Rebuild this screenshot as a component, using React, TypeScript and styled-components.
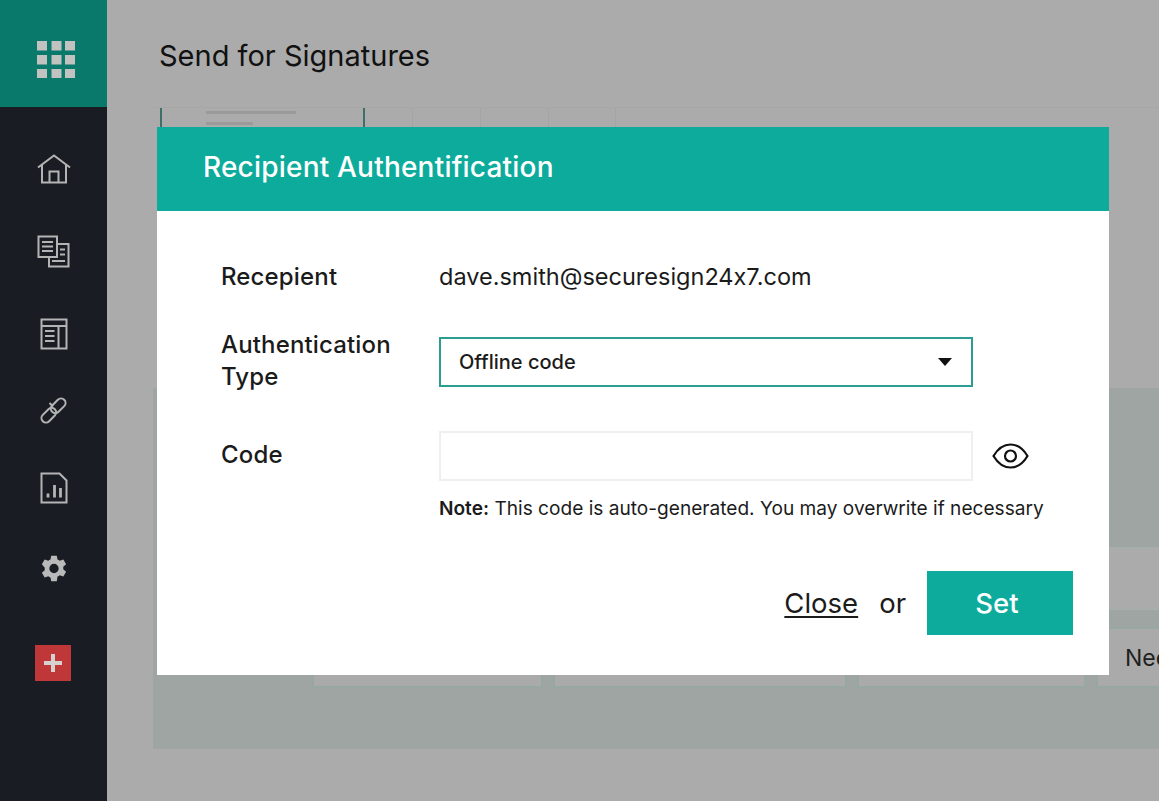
import React from "react";
import styled, { createGlobalStyle } from "styled-components";

const GlobalStyle = createGlobalStyle`
  * {
    box-sizing: border-box;
  }

  html,
  body {
    margin: 0;
    background: #fff;
    font-family: Inter, "Noto Sans", sans-serif;
    font-feature-settings: "calt" 0;
    overflow: hidden;
  }
`;

const GridIcon = () => (
  <svg width="38" height="37" viewBox="0 0 38 37" fill="#c2c2c0">
    {[0, 14.5, 28].map((x) =>
      [0, 14, 28].map((y) => <rect key={`${x}-${y}`} x={x} y={y} width="10" height="9.5" />)
    )}
  </svg>
);

const HomeIcon = () => (
  <svg width="34" height="30" viewBox="0 0 34 30" fill="none" stroke="#b4b4b4" strokeWidth="2">
    <path d="M1 13.5 17 1.500l16 12" />
    <path d="M5 11v17.500h24V11" />
    <path d="M12.500 28.500V17.500h9v11" />
  </svg>
);

const DocsIcon = () => (
  <svg width="33" height="33" viewBox="0 0 33 33" fill="none" stroke="#b4b4b4" strokeWidth="2">
    <path d="M20 22H1.500V1.500H20V22Z" />
    <path d="M5 7h11M5 11.500h11M5 16h11" />
    <path d="M20 9h11.500v22.500H12V22" />
    <path d="M23 14.500h5M23 19.500h5M15 26h13" />
  </svg>
);

const TemplateIcon = () => (
  <svg width="28" height="32" viewBox="0 0 28 32" fill="none" stroke="#b4b4b4" strokeWidth="2">
    <path d="M1.500 1.500h25v29h-25z" />
    <path d="M1.500 8h25M18.500 8v22.500" />
    <path d="M5 13h9.500M5 18h9.500M5 23h9.500" />
  </svg>
);

const LinkIcon = () => (
  <svg width="27" height="27" viewBox="0 0 27 27" fill="none" stroke="#b4b4b4" strokeWidth="2">
    <path d="M13 9.500 9.500 6a4.500 4.500 0 0 0 0 0" />
    <rect x="-8.500" y="-4.500" width="17" height="9" rx="4.500" transform="translate(8.800 18.200) rotate(-45)" />
    <rect x="-8.500" y="-4.500" width="17" height="9" rx="4.500" transform="translate(18.200 8.800) rotate(-45)" />
  </svg>
);

const ReportIcon = () => (
  <svg width="28" height="32" viewBox="0 0 28 32" fill="none" stroke="#b4b4b4" strokeWidth="2">
    <path d="M1.500 1.500h18l7 7v22h-25z" />
    <path d="M8 25.500v-4M14.500 25.500V13M20.500 25.500V16" strokeWidth="2.800" />
  </svg>
);

const GearIcon = () => (
  <svg width="28" height="29" viewBox="0 0 24 24" fill="#b9b9b9">
    <path
      fillRule="evenodd"
      d="M9.600 1h4.800l.6 3.200c.7.3 1.300.6 1.900 1.100l3.100-1.100 2.400 4.200-2.500 2.100c.1.700.1 1.400 0 2.100l2.500 2.100-2.400 4.200-3.100-1.100c-.6.500-1.200.8-1.900 1.100L14.400 23H9.600L9 19.800c-.7-.3-1.300-.6-1.900-1.100L4 19.800l-2.400-4.200 2.500-2.100a7 7 0 0 1 0-2.100L1.600 8.400 4 4.200l3.100 1.100C7.700 4.800 8.300 4.500 9 4.200L9.600 1ZM12 8a4 4 0 1 0 0 8 4 4 0 0 0 0-8Z"
    />
  </svg>
);

const EyeIcon = () => (
  <svg width="37" height="28" viewBox="0 0 37 28" fill="none" stroke="#111" strokeWidth="2.200">
    <path d="M1.500 14C6 6.500 12 2.500 18.500 2.500S31 6.500 35.500 14C31 21.500 25 25.500 18.500 25.500S6 21.500 1.500 14Z" />
    <circle cx="18.500" cy="14" r="5.500" />
  </svg>
);

const navItems = [
  { icon: <HomeIcon />, top: 47 },
  { icon: <DocsIcon />, top: 51 },
  { icon: <TemplateIcon />, top: 50 },
  { icon: <LinkIcon />, top: 47 },
  { icon: <ReportIcon />, top: 48 },
  { icon: <GearIcon />, top: 50 },
];

const cards = [
  { width: 231 },
  { width: 294 },
  { width: 229 },
  { width: 100, label: "Need" },
];

const App = () => {
  return (
    <>
      <GlobalStyle />
      <Page>
        <Sidebar>
          <AppTile>
            <GridIcon />
          </AppTile>
          {navItems.map((item, i) => (
            <NavItem key={i} $top={item.top}>
              {item.icon}
            </NavItem>
          ))}
          <AddButton>
            <PlusH />
            <PlusV />
          </AddButton>
        </Sidebar>

        <Main>
          <TopBar>Send for Signatures</TopBar>

          <Tabs>
            <Tab $width={203} $accent>
              <TabLine $width={90} />
              <TabLine $width={47} />
            </Tab>
            <Tab $width={49} $accent />
            <Tab $width={68} />
            <Tab $width={68} />
            <Tab $width={67} />
            <Tab $width={67} />
          </Tabs>

          <Panel>
            <PanelRow />
            <CardRow>
              {cards.map((card, i) => (
                <Card key={i} $width={card.width}>
                  {card.label}
                </Card>
              ))}
            </CardRow>
          </Panel>
        </Main>

        <Modal>
          <ModalHeader>Recipient Authentification</ModalHeader>
          <ModalBody>
            <Form>
              <Label>Recepient</Label>
              <Value>dave.smith@securesign24x7.com</Value>

              <Label>
                Authentication
                <br />
                Type
              </Label>
              <Select>
                Offline code
                <Caret />
              </Select>

              <CodeLabel>Code</CodeLabel>
              <CodeField>
                <CodeInput />
                <EyeIcon />
              </CodeField>
            </Form>

            <Note>
              <b>Note:</b> This code is auto-generated. You may overwrite if necessary
            </Note>

            <Footer>
              <CloseLink>Close</CloseLink>
              <Or>or</Or>
              <SetButton>Set</SetButton>
            </Footer>
          </ModalBody>
        </Modal>
      </Page>
    </>
  );
};

const Page = styled.div`
  position: relative;
  width: 1159px;
  height: 801px;
  display: flex;
  background: #ababab;
  overflow: hidden;
`;

const Sidebar = styled.div`
  width: 107px;
  flex-shrink: 0;
  background: #1a1c23;
  display: flex;
  flex-direction: column;
  align-items: center;
`;

const AppTile = styled.div`
  width: 100%;
  height: 107px;
  padding: 41px 0 0 4px;
  display: flex;
  justify-content: center;
  background: #08796b;
`;

const NavItem = styled.div<{ $top: number }>`
  margin-top: ${(props) => props.$top}px;
  display: flex;
  line-height: 0;
`;

const AddButton = styled.div`
  position: relative;
  width: 36px;
  height: 36px;
  margin: 62px 1px 0 0;
  background: #c0373a;
`;

const PlusH = styled.span`
  position: absolute;
  left: 9px;
  top: 16px;
  width: 18px;
  height: 4px;
  background: #d6d0ce;
`;

const PlusV = styled.span`
  position: absolute;
  left: 16px;
  top: 9px;
  width: 4px;
  height: 18px;
  background: #d6d0ce;
`;

const Main = styled.div`
  flex: 1;
  min-width: 0;
  padding-left: 46px;
`;

const TopBar = styled.div`
  height: 107px;
  padding: 3px 0 0 6px;
  display: flex;
  align-items: center;
  font-size: 29px;
  color: #111;
`;

const Tabs = styled.div`
  height: 281px;
  padding-left: 7px;
  display: flex;
  border-top: 1px solid #a7a7a7;
`;

const Tab = styled.div<{ $width: number; $accent?: boolean }>`
  width: ${(props) => props.$width}px;
  flex-shrink: 0;
  padding: 3px 0 0 44px;
  border-left: ${(props) => (props.$accent ? "2px solid #3f6f68" : "1px solid #a4a4a4")};
`;

const TabLine = styled.div<{ $width: number }>`
  width: ${(props) => props.$width}px;
  height: 3px;
  margin-bottom: 8px;
  background: #9a9a9a;
`;

const Panel = styled.div`
  height: 361px;
  padding: 159px 0 0 159px;
  background: #9fa5a3;
`;

const PanelRow = styled.div`
  height: 63px;
  background: #ababab;
  border-top: 1px solid #a3b1ac;
  border-bottom: 1px solid #a3b1ac;
`;

const CardRow = styled.div`
  margin-top: 17px;
  display: flex;
  gap: 10px;
`;

const Card = styled.div<{ $width: number }>`
  width: ${(props) => props.$width}px;
  height: 61px;
  flex-shrink: 0;
  padding-left: 27px;
  display: flex;
  align-items: center;
  background: #a9aaa9;
  border: 2px solid #97a8a2;
  font-size: 23px;
  color: #1f1f1f;
  white-space: nowrap;
`;

const Modal = styled.div`
  position: absolute;
  left: 157px;
  top: 127px;
  width: 952px;
  height: 548px;
  background: #fff;
  color: #1b1b1b;
`;

const ModalHeader = styled.div`
  height: 84px;
  padding: 0 0 4px 46px;
  display: flex;
  align-items: center;
  background: #0dab9c;
  color: #fff;
  font-size: 28px;
  font-weight: 500;
  letter-spacing: 0.2px;
`;

const ModalBody = styled.div`
  padding: 50px 36px 0 64px;
`;

const Form = styled.div`
  display: grid;
  grid-template-columns: 218px 1fr;
  row-gap: 36px;
  font-size: 24px;
  line-height: 32px;
`;

const Label = styled.div`
  font-weight: 450;
  letter-spacing: 0.15px;
`;

const CodeLabel = styled(Label)`
  margin-top: 10px;
`;

const Value = styled.div`
  font-size: 23.5px;
`;

const Select = styled.div`
  position: relative;
  width: 534px;
  height: 50px;
  margin-top: 8px;
  padding-left: 18px;
  display: flex;
  align-items: center;
  border: 2px solid #2b9d91;
  font-size: 20px;
  font-weight: 450;
`;

const Caret = styled.span`
  position: absolute;
  right: 19px;
  top: 19px;
  border-left: 7px solid transparent;
  border-right: 7px solid transparent;
  border-top: 8px solid #111;
`;

const CodeField = styled.div`
  margin-top: 2px;
  display: flex;
  align-items: center;
  gap: 19px;
`;

const CodeInput = styled.div`
  width: 534px;
  height: 50px;
  border: 2px solid #efefef;
`;

const Note = styled.div`
  margin: 15px 0 0 218px;
  font-size: 19.1px;
  line-height: 24px;
  white-space: nowrap;

  b {
    font-weight: 600;
  }
`;

const Footer = styled.div`
  margin-top: 51px;
  display: flex;
  justify-content: flex-end;
  align-items: center;
  font-size: 27.5px;
`;

const CloseLink = styled.span`
  text-decoration: underline;
  text-underline-offset: 3px;
  cursor: pointer;
`;

const Or = styled.span`
  margin: 0 21px;
`;

const SetButton = styled.div`
  width: 146px;
  height: 64px;
  padding-right: 6px;
  display: flex;
  align-items: center;
  justify-content: center;
  background: #0dab9c;
  color: #fff;
  font-weight: 500;
  cursor: pointer;
`;

export default App;
